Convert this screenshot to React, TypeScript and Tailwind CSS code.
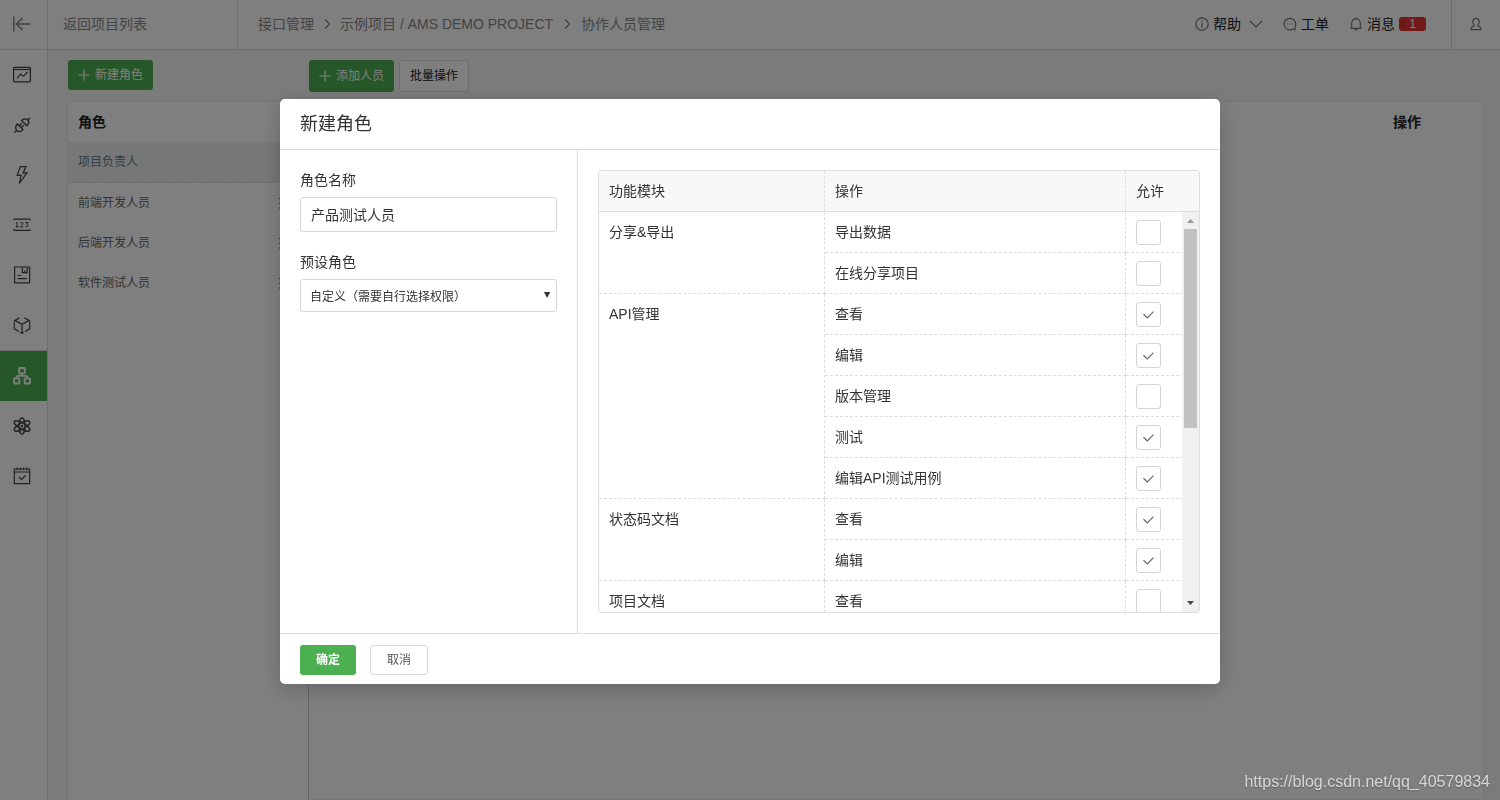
import { Fragment, ReactNode, useState } from 'react'
import clsx from 'clsx'

type Permission = { name: string; allowed: boolean }
type Module = { name: string; permissions: Permission[] }

const modules: Module[] = [
  {
    name: '分享&导出',
    permissions: [
      { name: '导出数据', allowed: false },
      { name: '在线分享项目', allowed: false },
    ],
  },
  {
    name: 'API管理',
    permissions: [
      { name: '查看', allowed: true },
      { name: '编辑', allowed: true },
      { name: '版本管理', allowed: false },
      { name: '测试', allowed: true },
      { name: '编辑API测试用例', allowed: true },
    ],
  },
  {
    name: '状态码文档',
    permissions: [
      { name: '查看', allowed: true },
      { name: '编辑', allowed: true },
    ],
  },
  {
    name: '项目文档',
    permissions: [{ name: '查看', allowed: false }],
  },
]

const roles = ['项目负责人', '前端开发人员', '后端开发人员', '软件测试人员']

function Icon({ children, size = 18, className }: { children: ReactNode; size?: number; className?: string }) {
  return (
    <svg
      width={size}
      height={size}
      viewBox={`0 0 ${size} ${size}`}
      fill="none"
      stroke="currentColor"
      strokeWidth="1.2"
      className={clsx('shrink-0', className)}
      aria-hidden="true"
    >
      {children}
    </svg>
  )
}

const navItems = [
  {
    label: '概况',
    icon: (
      <>
        <rect x=".6" y="1.400" width="16.800" height="14.400" rx=".8" />
        <path d="M.6 3.500h16.800" />
        <path d="M4 12.300l3.600-4.300 2.800 2.300 4.100-4.300" />
      </>
    ),
  },
  {
    label: '接口',
    icon: (
      <g strokeWidth="1.400">
        <path d="M1.400 16.600l1.800-1.800M15 4.200l1.900-2.400" />
        <path d="M4.400 8l5.600 5.600c-1.900 2.200-4.500 2.700-6.200 1s-1.500-4.600.6-6.600z" />
        <path d="M8.600 4.600l5.200 5.200c2-1.900 2.600-4.200.9-5.900s-4.100-1.300-6.100.7z" />
        <path d="M6.200 9.800l2.600-2.600M8.200 11.800l2.600-2.600" />
      </g>
    ),
  },
  { label: '自动化', icon: <path d="M7.300.6L4.200 9.400h4L6.200 17.400 14 6.900h-3.900L13 .6z" /> },
  {
    label: '状态码',
    icon: (
      <>
        <path d="M.6 4.300l.6-1.200h15.600l.6 1.200M.6 13l.6 1.300h15.600l.6-1.300" />
        <path
          strokeWidth="1"
          d="M2.900 7l1.200-.6v4.500M2.700 10.900h2.900M7.300 7.200c.3-1 2.900-1 2.900.3 0 1.100-2.800 2-2.900 3.400h3M12.300 6.500h2.800l-1.500 1.700c2.300.1 2 2.700.1 2.700-.7 0-1.200-.2-1.500-.6"
        />
      </>
    ),
  },
  {
    label: '文档',
    icon: (
      <>
        <path d="M1.600 1h15v15.800h-15z" />
        <path d="M9.300 1v5.700h4.800V1M11.700 4.500v2M4.500 9.500h3.800M4.500 12.700h9.300" />
      </>
    ),
  },
  {
    label: '环境',
    icon: (
      <>
        <path d="M6.500 1.900L1.800 4.400 9 8.300l7.200-3.900-4.700-2.500M9 8.300v8.900M1.300 6.500v6.300l4.700 2.800M16.700 6.500v6.300L12 15.600" />
        <path d="M1.300 5.200v1.300M16.700 5.200v1.300M7 16.200l2 1.100 2-1.100" />
      </>
    ),
  },
  {
    label: '协作管理',
    active: true,
    icon: (
      <g strokeWidth="1.800">
        <rect x="6.200" y="1" width="5.600" height="5.400" rx=".6" />
        <rect x="1" y="11.300" width="5.400" height="5.200" rx=".6" />
        <rect x="11.600" y="11.300" width="5.400" height="5.200" rx=".6" />
        <path d="M9 6.400v2.400M3.700 11.300V9.800l1-1h8.600l1 1v1.500" />
      </g>
    ),
  },
  {
    label: '插件',
    icon: (
      <g strokeWidth="1.300">
        <ellipse cx="9" cy="9" rx="3" ry="8.200" />
        <ellipse cx="9" cy="9" rx="3" ry="8.800" transform="rotate(60 9 9)" />
        <ellipse cx="9" cy="9" rx="3" ry="8.800" transform="rotate(120 9 9)" />
        <circle cx="9" cy="9" r=".6" />
      </g>
    ),
  },
  {
    label: '计划',
    icon: (
      <>
        <path d="M1.300 2h15.400v14.700H1.300zM1.300 5h15.400M4.200.5v2.700M7.400.5v2.700M10.600.5v2.700M13.800.5v2.700" />
        <path d="M5.800 10l2.800 2.500 4-4" />
      </>
    ),
  },
]

function TopBar() {
  return (
    <header className="flex h-[50px] items-stretch border-b border-[#d8d8d8] bg-white text-[#888]">
      <button className="flex w-12 items-center border-r border-[#d8d8d8] pb-0.5 pl-[13px]" aria-label="返回">
        <Icon>
          <path d="M.8 1.500v15M3.500 9h14M9.500 3L3.500 9l6 6" strokeWidth="1.500" />
        </Icon>
      </button>
      <a href="#" className="flex w-[190px] items-center border-r border-[#d8d8d8] pb-0.5 pl-[15px]">
        返回项目列表
      </a>
      <nav className="flex items-center gap-2 pb-0.5 pl-5">
        <a href="#">接口管理</a>
        <Icon size={10}>
          <path d="M3 .5L7.500 5 3 9.500" />
        </Icon>
        <a href="#">示例项目 / AMS DEMO PROJECT</a>
        <Icon size={10} className="mx-px">
          <path d="M3 .5L7.500 5 3 9.500" />
        </Icon>
        <a href="#">协作人员管理</a>
      </nav>
      <div className="ml-auto flex items-center gap-5 pr-[25px] pb-0.5 text-[#222]">
        <button className="flex items-center gap-1">
          <Icon size={14} className="text-[#777]">
            <circle cx="7" cy="7" r="6.200" />
            <path d="M7 5.800v4.900M7 3.400v1.300" />
          </Icon>
          帮助
          <Icon size={14} className="ml-1 text-[#777]">
            <path d="M1 4l6 6 6-6" />
          </Icon>
        </button>
        <button className="flex items-center gap-1">
          <Icon size={14} className="text-[#777]">
            <path d="M10 12.100A5.800 5.800 0 1 1 12 10v2.700z" />
            <path d="M3.900 7h1.200M6.400 7h1.200M8.900 7h1.200" />
          </Icon>
          工单
        </button>
        <button className="flex items-center gap-1">
          <Icon size={14} className="text-[#777]">
            <path d="M1.200 11.400h11.600M2.700 11.200V6.500c0-2.800 1.800-4.600 4.300-4.600s4.300 1.800 4.300 4.600v4.700M7 .5v1.400M5.500 11.700c.3 1.700 2.700 1.700 3 0" />
          </Icon>
          消息
          <span className="h-[14px] w-[27px] rounded-[3px] bg-[#e23434] text-center text-xs leading-[14px] text-white">1</span>
        </button>
      </div>
      <button className="flex w-[49px] items-center justify-center border-l border-[#d8d8d8] pb-0.5" aria-label="账户">
        <Icon size={14} className="text-[#777]">
          <path d="M5 7.800C3 6.200 3.300 1.300 7 1.300s4 4.900 2 6.500M5 7.800v.9C3 9.300 2 10.600 1.900 12.700h10.200C12 10.600 11 9.300 9 8.700v-.9" />
        </Icon>
      </button>
    </header>
  )
}

function Sidebar() {
  return (
    <nav className="w-12 shrink-0 border-r border-[#d8d8d8] bg-white">
      {navItems.map((item) => (
        <a
          key={item.label}
          href="#"
          aria-label={item.label}
          className={clsx(
            'flex items-center pl-[13px]',
            item.active ? 'h-[51px] border-t border-[#d8d8d8] bg-[#4caf50] text-white' : 'h-[50px] text-[#444]',
          )}
        >
          <Icon>{item.icon}</Icon>
        </a>
      ))}
    </nav>
  )
}

function AddButton({ children, className }: { children: ReactNode; className: string }) {
  return (
    <button className={clsx('flex w-[85px] items-center justify-center gap-1 rounded-[3px] bg-[#4caf50] pr-px text-xs text-white', className)}>
      <Icon size={14}>
        <path d="M7 1.500v11M1.500 7h11" />
      </Icon>
      {children}
    </button>
  )
}

function RolePanel() {
  return (
    <aside className="flex w-[260px] shrink-0 flex-col pl-[19px] pt-[10px]">
      <AddButton className="ml-px h-[30px]">新建角色</AddButton>
      <div className="mt-[11px] flex-1 border-l border-t border-[#eee] bg-white">
        <h2 className="px-[10px] text-sm leading-10 font-bold text-[#222]">角色</h2>
        <ul className="text-xs text-[#666]">
          {roles.map((role, i) => (
            <li
              key={role}
              className={clsx(
                'flex items-center justify-between pl-[10px] pr-[18px]',
                i === 0 ? 'h-[41px] border-b border-dashed border-[#ddd] bg-[#eee] text-[#607d8b]' : 'h-10',
              )}
            >
              {role}
              {i > 0 && (
                <Icon size={12}>
                  <path d="M1 1.500h9M1 6.500h9M1 11h9" />
                </Icon>
              )}
            </li>
          ))}
        </ul>
      </div>
    </aside>
  )
}

function MemberPanel() {
  return (
    <main className="flex min-w-0 flex-1 flex-col pr-4 pt-[10px]">
      <div className="flex gap-[5px] pl-px">
        <AddButton className="h-8">添加人员</AddButton>
        <button className="h-8 w-[70px] rounded-[3px] border border-[#ddd] bg-white text-xs text-[#222]">批量操作</button>
      </div>
      <div className="mt-[9px] flex-1 border border-[#eee] border-l-[#ccc] bg-white">
        <h2 className="pr-[62px] text-right text-sm leading-10 font-bold text-[#222]">操作</h2>
      </div>
    </main>
  )
}

function PermissionTable() {
  const [allowed, setAllowed] = useState(() => modules.map((m) => m.permissions.map((p) => p.allowed)))

  const toggle = (row: number, col: number) =>
    setAllowed((prev) => prev.map((list, i) => list.map((v, j) => (i === row && j === col ? !v : v))))

  const cell = 'border-b border-dashed border-[#ddd] px-[10px]'

  return (
    <div className="relative h-[443px] overflow-hidden rounded-[3px] border border-[#ddd]">
      <table className="w-full table-fixed border-separate border-spacing-0 text-left">
        <colgroup>
          <col className="w-[226px]" />
          <col className="w-[301px]" />
          <col />
        </colgroup>
        <thead className="bg-[#f8f8f8]">
          <tr className="h-[41px]">
            <th className="border-r border-b border-[#ddd] px-[10px] font-normal [border-right-style:dashed]">功能模块</th>
            <th className="border-r border-b border-[#ddd] px-[10px] font-normal [border-right-style:dashed]">操作</th>
            <th className="border-b border-[#ddd] px-[10px] font-normal">允许</th>
          </tr>
        </thead>
        <tbody>
          {modules.map((module, i) => (
            <Fragment key={module.name}>
              {module.permissions.map((permission, j) => (
                <tr key={permission.name} className="h-[41px]">
                  {j === 0 && (
                    <td rowSpan={module.permissions.length} className={clsx(cell, 'border-r align-top leading-10')}>
                      {module.name}
                    </td>
                  )}
                  <td className={clsx(cell, 'border-r')}>{permission.name}</td>
                  <td className={cell}>
                    <label className="relative block size-[25px]">
                      <input
                        type="checkbox"
                        aria-label={`${module.name} ${permission.name}`}
                        checked={allowed[i][j]}
                        onChange={() => toggle(i, j)}
                        className="peer block size-[25px] appearance-none rounded-[3px] border border-[#d4d4d4] bg-white"
                      />
                      <svg
                        viewBox="0 0 25 25"
                        fill="none"
                        stroke="#666"
                        strokeWidth="1.200"
                        className="pointer-events-none absolute inset-0 hidden peer-checked:block"
                      >
                        <path d="M7.500 12.300l3.800 3.600 6.200-6.200" />
                      </svg>
                    </label>
                  </td>
                </tr>
              ))}
            </Fragment>
          ))}
        </tbody>
      </table>
      {/* scroll bar */}
      <div className="absolute top-[41px] right-0 bottom-0 flex w-[17px] flex-col items-center bg-[#f0f0f0]">
        <svg width="17" height="17" viewBox="0 0 17 17" fill="#999" className="shrink-0">
          <path d="M5 11h7L8.500 7z" />
        </svg>
        <div className="h-[199px] w-[13px] bg-[#c1c1c1]" />
        <svg width="17" height="17" viewBox="0 0 17 17" fill="#444" className="mt-auto shrink-0">
          <path d="M5 6h7l-3.500 4z" />
        </svg>
      </div>
    </div>
  )
}

function RoleDialog() {
  const [name, setName] = useState('产品测试人员')

  return (
    <div
      role="dialog"
      aria-labelledby="dialog-title"
      className="w-full max-w-[940px] rounded-[5px] bg-white text-[#333] shadow-[0_5px_20px_rgba(0,0,0,0.2)]"
    >
      <h1 id="dialog-title" className="border-b border-[#ddd] px-5 text-lg leading-[50px]">
        新建角色
      </h1>
      <div className="flex">
        <div className="flex w-[298px] shrink-0 flex-col gap-5 border-r border-[#ddd] p-5">
          <div className="flex flex-col gap-[7px]">
            <label htmlFor="role-name">角色名称</label>
            <input
              id="role-name"
              value={name}
              onChange={(e) => setName(e.target.value)}
              className="h-[35px] rounded-[3px] border border-[#d8d8d8] px-[10px] pb-0.5 outline-none"
            />
          </div>
          <div className="flex flex-col gap-[7px]">
            <label htmlFor="role-preset">预设角色</label>
            <div className="relative">
              <select
                id="role-preset"
                className="block h-[33px] w-full appearance-none rounded-[3px] border border-[#d8d8d8] bg-white px-[9px] pt-0.5 text-xs outline-none"
              >
                <option>自定义（需要自行选择权限）</option>
              </select>
              <svg width="8" height="8" viewBox="0 0 8 8" fill="#333" className="pointer-events-none absolute top-3 right-[6px]">
                <path d="M1 1h6.200L4.100 7z" />
              </svg>
            </div>
          </div>
        </div>
        <div className="min-w-0 flex-1 p-5">
          <PermissionTable />
        </div>
      </div>
      <div className="flex gap-[14px] border-t border-[#ddd] px-5 pt-[11px] pb-[9px] text-xs">
        <button className="h-[30px] w-14 rounded-[3px] bg-[#4caf50] font-bold text-white">确定</button>
        <button className="h-[30px] w-[58px] rounded-[3px] border border-[#d8d8d8] text-[#555]">取消</button>
      </div>
    </div>
  )
}

export default function App() {
  return (
    <div className="font-['Liberation_Sans','Noto_Sans_CJK_SC',sans-serif] text-sm">
      <div className="flex h-screen flex-col bg-[#f7f7f7]">
        <TopBar />
        <div className="flex min-h-0 flex-1">
          <Sidebar />
          <RolePanel />
          <MemberPanel />
        </div>
      </div>
      <div className="fixed inset-0 flex items-start justify-center bg-black/50 pt-[99px]">
        <RoleDialog />
      </div>
      <p className="fixed right-[10px] bottom-[6px] text-base text-[#d8d8d8] [text-shadow:0_1px_1px_rgba(0,0,0,0.3)]">
        https://blog.csdn.net/qq_40579834
      </p>
    </div>
  )
}
